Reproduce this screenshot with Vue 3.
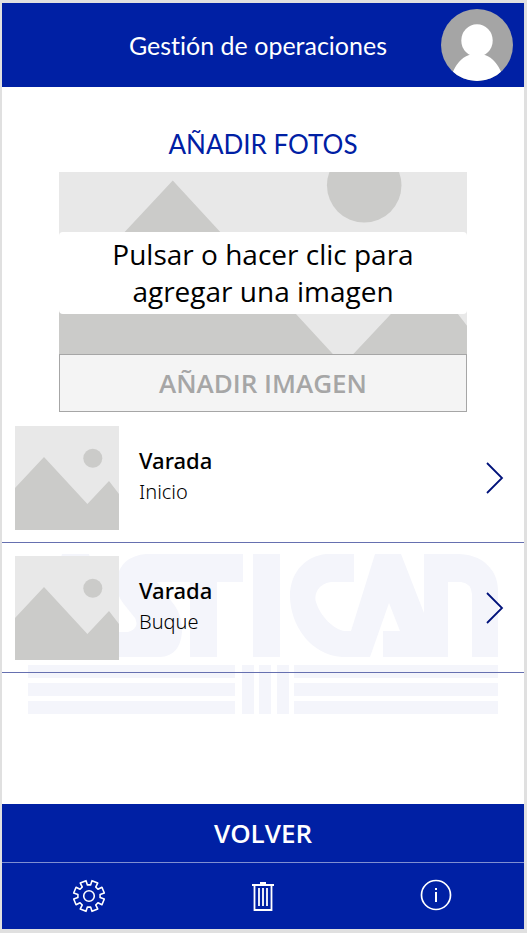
<script setup>
import { ref } from 'vue'

const items = ref([
  { id: 1, title: 'Varada', detail: 'Inicio' },
  { id: 2, title: 'Varada', detail: 'Buque' },
])

// Outline of an eight-toothed gear centred on the origin
const teeth = 8
const gear = Array.from({ length: teeth }, (_, i) => {
  const step = (Math.PI * 2) / teeth
  const at = (angle, radius) =>
    `${(Math.sin(angle) * radius).toFixed(2)} ${(-Math.cos(angle) * radius).toFixed(2)}`
  const mid = i * step + step / 2
  return [
    at(mid - 0.25, 11.2),
    at(mid - 0.2, 15.6),
    at(mid + 0.2, 15.6),
    at(mid + 0.25, 11.2),
  ].join(' L')
}).join(' L')
</script>

<template>
  <div class="screen">
    <header class="top">
      <h1>Gestión de operaciones</h1>
      <svg class="avatar" viewBox="0 0 72 72" role="img" aria-label="Usuario">
        <defs>
          <clipPath id="avatar-clip"><circle cx="36" cy="36" r="36" /></clipPath>
        </defs>
        <g clip-path="url(#avatar-clip)">
          <rect width="72" height="72" fill="#a5a5a5" />
          <ellipse cx="36" cy="31.500" rx="15.700" ry="16.300" fill="#fff" />
          <path d="M11 65C15 55 20 49 28 46Q31 45 30 43H42Q41 45 44 46C52 49 57 55 61 65V74H11Z" fill="#fff" />
        </g>
      </svg>
    </header>

    <main class="content">
      <svg class="watermark" viewBox="0 0 470 160" aria-hidden="true">
        <g fill="#f4f5fb">
          <path d="M34 0H61L92 103H64L48 50L30 103H0Z" />
          <path d="M215 0V28H189V103H162V28H129L147 52Q154 62 154 78Q152 102 132 103H78V78H100Q112 74 107 64L95 49Q88 40 88 26Q93 2 118 0Z" />
          <path d="M225 0H252V103H225Z" />
          <path d="M326 0V28H303C290 30 286 40 288 48C292 62 306 76 317 77H323L347 0H373L396 59V0H430C453 0 470 15 470 36V103H444V40Q443 29 433 28H420V103H355V77H372L361 49L342 103H314C282 101 262 70 262 42C262 18 278 2 298 0Z" />
          <path d="M0 111H207V124H0ZM0 129H207V142H0ZM0 147H207V160H0Z" />
          <path d="M214 111H226V160H214ZM231 111H243V160H231ZM249 111H261V160H249Z" />
          <path d="M266 111H470V124H266ZM266 129H470V142H266ZM266 147H470V160H266Z" />
        </g>
      </svg>

      <section class="add">
        <h2>AÑADIR FOTOS</h2>
        <label class="picker">
          <svg class="placeholder" viewBox="0 0 104 104" preserveAspectRatio="xMidYMid slice" aria-hidden="true">
            <rect width="104" height="104" fill="#e8e8e8" />
            <path d="M0 62L29 31L72.400 78L94 55L104 68V104H0Z" fill="#cbcbc9" />
            <circle cx="77.800" cy="32.200" r="9.500" fill="#cbcbc9" />
          </svg>
          <span class="hint">Pulsar o hacer clic para agregar una imagen</span>
          <input class="file" type="file" accept="image/*" />
        </label>
        <button class="upload" type="button" disabled>AÑADIR IMAGEN</button>
      </section>

      <ul class="list">
        <li v-for="item in items" :key="item.id">
          <button class="row" type="button">
            <svg class="thumb" viewBox="0 0 104 104" aria-hidden="true">
              <rect width="104" height="104" fill="#e8e8e8" />
              <path d="M0 62L29 31L72.400 78L94 55L104 68V104H0Z" fill="#cbcbc9" />
              <circle cx="77.800" cy="32.200" r="9.500" fill="#cbcbc9" />
            </svg>
            <span class="text">
              <span class="title">{{ item.title }}</span>
              <span class="detail">{{ item.detail }}</span>
            </span>
            <svg class="chevron" viewBox="0 0 18 32" aria-hidden="true">
              <path d="M1 1L16 16L1 31" fill="none" stroke="#00127a" stroke-width="1.800" />
            </svg>
          </button>
        </li>
      </ul>
    </main>

    <footer>
      <button class="back" type="button">VOLVER</button>
      <nav class="tools">
        <button type="button" aria-label="Ajustes">
          <svg viewBox="-18 -18 36 36" aria-hidden="true">
            <g fill="none" stroke="#fff" stroke-width="1.600" stroke-linejoin="round">
              <path :d="`M${gear}Z`" />
              <circle r="5.300" />
            </g>
          </svg>
        </button>
        <button type="button" aria-label="Eliminar">
          <svg viewBox="-18 -18 36 36" aria-hidden="true">
            <path d="M-3 -14H3V-12H11V-10H-11V-12H-3Z" fill="#fff" />
            <path d="M-8.500 -10V14H8.500V-10M-4 -8V10M0 -8V10M4 -8V10" fill="none" stroke="#fff" stroke-width="1.800" />
          </svg>
        </button>
        <button type="button" aria-label="Información">
          <svg viewBox="-18 -18 36 36" aria-hidden="true">
            <circle cx="-1" cy="-1" r="14.500" fill="none" stroke="#fff" stroke-width="1.700" />
            <path d="M-2 -8H0V-6H-2ZM-2 -4H0V6H-2Z" fill="#fff" />
          </svg>
        </button>
      </nav>
    </footer>
  </div>
</template>

<style>
body {
  margin: 0;
  background: #e0e0e0;
}
</style>

<style scoped>
.screen {
  box-sizing: border-box;
  min-height: 100vh;
  padding: 3px 3px 4px 2px;
  display: flex;
  flex-direction: column;
  font-family: "Open Sans", "Noto Sans", sans-serif;
  color: #000;
}
button {
  margin: 0;
  padding: 0;
  border: 0;
  background: none;
  font: inherit;
  color: inherit;
}
svg {
  display: block;
}
.top {
  height: 84px;
  padding: 0 11px 0 1px;
  display: grid;
  grid-template-columns: 72px 1fr 72px;
  align-items: center;
  background: #0020a4;
}
h1 {
  grid-column: 2;
  margin: 0;
  text-align: center;
  white-space: nowrap;
  font: 400 25px/32px Lato, sans-serif;
  font-variant-ligatures: none;
  color: #fff;
}
.avatar {
  width: 72px;
  height: 72px;
}
.content {
  flex: 1;
  position: relative;
  background: #fff;
}
.watermark {
  position: absolute;
  left: 26px;
  right: 26px;
  top: 467px;
}
.add {
  position: relative;
  padding: 41px 57px 0;
}
h2 {
  margin: 0 0 12px;
  text-align: center;
  font: 400 26px/32px Lato, sans-serif;
  color: #0020a4;
}
.picker {
  box-sizing: border-box;
  position: relative;
  height: 182px;
  padding-top: 20px;
  display: flex;
  align-items: center;
}
.placeholder {
  position: absolute;
  inset: 0;
  width: 100%;
  height: 100%;
}
.hint {
  position: relative;
  flex: 1;
  padding: 4px 40px;
  border-radius: 4px;
  background: #fff;
  text-align: center;
  font-size: 28px;
  line-height: 37px;
}
.file {
  position: absolute;
  inset: 0;
  width: 100%;
  height: 100%;
  opacity: 0;
}
.upload {
  box-sizing: border-box;
  width: 100%;
  height: 58px;
  display: block;
  border: 1px solid #a6a6a6;
  background: #f4f4f4;
  color: #a6a6a6;
  font-size: 26px;
  font-weight: 600;
}
.list {
  position: relative;
  margin: 0;
  padding: 1px 0 0;
  list-style: none;
}
.row {
  box-sizing: border-box;
  width: 100%;
  padding: 13px 20px 12px 13px;
  display: flex;
  align-items: center;
  gap: 20px;
  border-bottom: 1px solid #6670b0;
  text-align: left;
  font-family: "Noto Sans", "Open Sans", sans-serif;
}
.thumb {
  width: 104px;
  height: 104px;
}
.text {
  flex: 1;
  padding-bottom: 4px;
  display: flex;
  flex-direction: column;
  gap: 2px;
}
.title {
  font-size: 22px;
  line-height: 30px;
  font-weight: 500;
}
.detail {
  font-size: 20px;
  line-height: 30px;
  font-weight: 300;
}
.chevron {
  width: 18px;
  height: 32px;
}
footer {
  background: #0020a4;
  color: #fff;
}
.back {
  width: 100%;
  height: 59px;
  display: block;
  border-bottom: 1px solid #7f8fd1;
  font-size: 26px;
  font-weight: 600;
}
.tools {
  display: grid;
  grid-template-columns: repeat(3, 1fr);
}
.tools button {
  height: 66px;
  display: flex;
  align-items: center;
  justify-content: center;
}
.tools svg {
  width: 36px;
  height: 36px;
}
</style>
